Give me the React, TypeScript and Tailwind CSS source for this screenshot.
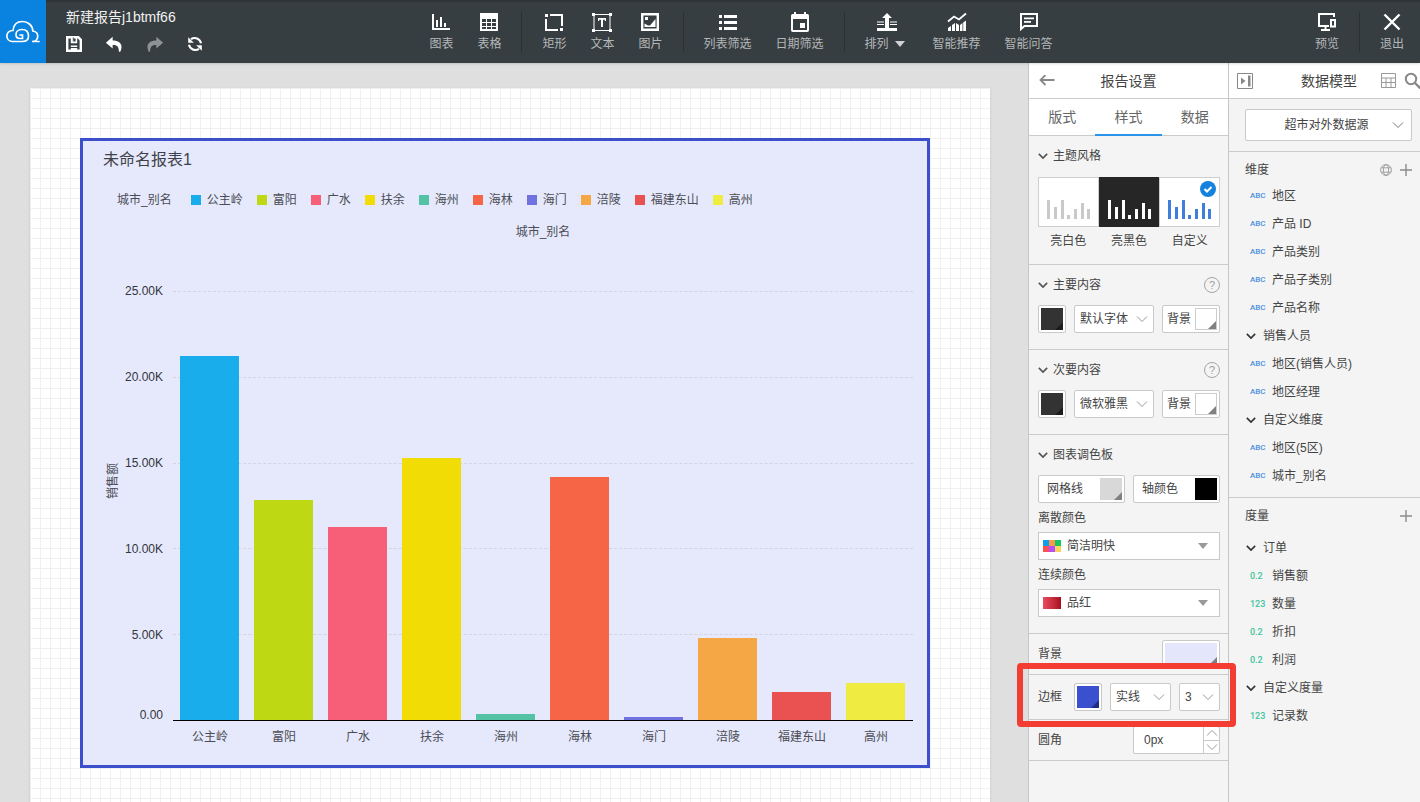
import { useState } from "react";
import type { ReactNode } from "react";
import clsx from "clsx";

const legend = [
  { name: "公主岭", value: 21230, color: "#1aadec" },
  { name: "富阳", value: 12830, color: "#bed914" },
  { name: "广水", value: 11250, color: "#f65f77" },
  { name: "扶余", value: 15270, color: "#f1dd05" },
  { name: "海州", value: 350, color: "#54c3a5" },
  { name: "海林", value: 14170, color: "#f66646" },
  { name: "海门", value: 190, color: "#7072df" },
  { name: "涪陵", value: 4780, color: "#f5a746" },
  { name: "福建东山", value: 1640, color: "#ea5251" },
  { name: "高州", value: 2160, color: "#f0eb41" },
];

const maxValue = 25000;
const ticks = ["25.00K", "20.00K", "15.00K", "10.00K", "5.00K"];

type Field = { type: "ABC" | "0.2" | "123" | "group"; label: string };

const dimensions: Field[] = [
  { type: "ABC", label: "地区" },
  { type: "ABC", label: "产品 ID" },
  { type: "ABC", label: "产品类别" },
  { type: "ABC", label: "产品子类别" },
  { type: "ABC", label: "产品名称" },
  { type: "group", label: "销售人员" },
  { type: "ABC", label: "地区(销售人员)" },
  { type: "ABC", label: "地区经理" },
  { type: "group", label: "自定义维度" },
  { type: "ABC", label: "地区(5区)" },
  { type: "ABC", label: "城市_别名" },
];

const measures: Field[] = [
  { type: "group", label: "订单" },
  { type: "0.2", label: "销售额" },
  { type: "123", label: "数量" },
  { type: "0.2", label: "折扣" },
  { type: "0.2", label: "利润" },
  { type: "group", label: "自定义度量" },
  { type: "123", label: "记录数" },
];

/* ---------- icons ---------- */

const Icon = ({ children, className = "size-5" }: { children: ReactNode; className?: string }) => (
  <svg viewBox="0 0 20 20" fill="currentColor" className={clsx("shrink-0", className)} aria-hidden="true">
    {children}
  </svg>
);

const ChartIcon = () => (
  <Icon>
    <path d="M1 2h2v14h16v2H1zM5 8h2v7H5zM9 5h2v10H9zM13 11h2v4h-2z" />
  </Icon>
);

const TableIcon = () => (
  <Icon>
    <path
      fillRule="evenodd"
      d="M1 1h18v18H1zM3 7v3h4V7zm5 0v3h4V7zm5 0v3h4V7zM3 11v3h4v-3zm5 0v3h4v-3zm5 0v3h4v-3zM3 15v2h4v-2zm5 0v2h4v-2zm5 0v2h4v-2z"
    />
  </Icon>
);

const RectIcon = () => (
  <Icon>
    <path d="M1 2h3v3H1zM6 2h13v12h-2V4H6zM1 7h2v10h11v2H1zM16 16h3v3h-3z" />
  </Icon>
);

const TextIcon = () => (
  <Icon>
    <path d="M2 2.5h16v16H2z" fill="none" stroke="currentColor" />
    <path d="M0 1h3v3H0zM17 1h3v3h-3zM0 17h3v3H0zM17 17h3v3h-3zM6 6h8v3h-1.2V7.7H11V15H9V7.7H7.2V9H6z" />
  </Icon>
);

const ImageIcon = () => (
  <Icon>
    <path fillRule="evenodd" d="M1 1h18v18H1zM3.400 3.400v13.200h13.200V3.400z" />
    <path d="M5 5h3v3H5zM4.500 15v-3.500L8 13.500h2l5.500-6.500v8z" />
  </Icon>
);

const ListIcon = () => (
  <Icon>
    <path d="M1 3h3v3H1zM6 3h13v3H6zM1 9h3v3H1zM6 9h13v3H6zM1 15h3v3H1zM6 15h13v3H6z" />
  </Icon>
);

const CalendarIcon = () => (
  <Icon>
    <path
      fillRule="evenodd"
      d="M4 0h2v2h8V0h2v2h1.500A1.800 1.800 0 0 1 19 3.800v14.400a1.800 1.800 0 0 1-1.800 1.800H2.800A1.800 1.800 0 0 1 1 18.200V3.800A1.800 1.800 0 0 1 2.800 2H4zM3 7v11h14V7zm7 4h5v5h-5z"
    />
  </Icon>
);

const ArrangeIcon = () => (
  <Icon>
    <path d="M10 1l5 5h-3v10H8V6H5zM0 16h20v3H0z" />
    <path d="M0 12.500h7M13 12.500h7M0 10h7M13 10h7" stroke="currentColor" />
  </Icon>
);

const RecommendIcon = () => (
  <Icon>
    <path d="M1 9.500l6-5 5 3 7-6" fill="none" stroke="currentColor" strokeWidth="1.800" />
    <path d="M1 16l3-2v5H1zM5 13l3-2v8H5zM9 11l3 2v6H9zM13 13l2.500-2v8H13zM16.200 10.500L19 8.500V19h-2.800z" />
  </Icon>
);

const ChatIcon = () => (
  <Icon>
    <path d="M2 2h16v12H5.500L2 17z" fill="none" stroke="currentColor" strokeWidth="2" />
    <path d="M5 5.500h10v1.800H5zM5 9h7v1.800H5z" />
  </Icon>
);

const PreviewIcon = () => (
  <Icon>
    <path d="M17 5V2H2v12h10M8.500 14v4M4 18h9" fill="none" stroke="currentColor" strokeWidth="2" />
    <path d="M14 8h4v6.500h-4z" fill="none" stroke="currentColor" strokeWidth="2" />
  </Icon>
);

const ExitIcon = () => (
  <Icon>
    <path d="M2.500 2.500l15 15M17.500 2.500l-15 15" stroke="currentColor" strokeWidth="2.400" />
  </Icon>
);

const CloudLogo = () => (
  <svg viewBox="0 0 34 24" className="w-[34px] h-6" fill="none" stroke="#fff" strokeWidth="1.700" strokeLinecap="round">
    <path d="M33 21.500h-7c7.500 0 7.500-10 .8-10.500C26.500 5 21.500 1.500 16.500 1.500 11 1.500 7.500 5 7 10.500-1 10.500-1 21 6 21.500h10.500c4 0 6-2 6-5.500 0-4.500-3-6.500-6.500-6.500-4 0-6 2.500-6 5 0 2.500 1.800 4 4 4h2.500V15H14" />
  </svg>
);

const SaveIcon = () => (
  <Icon className="size-4">
    <path
      fillRule="evenodd"
      d="M0 0h16l4 4v16H0zM3 3v14h14V5.500L15 3h-1v6H6V3zM8.500 2v5h1.200V2zM10 3h2v4h-2zM6 12h8v1.800H6zM6 15h8v2H6z"
    />
  </Icon>
);

const UndoIcon = ({ className }: { className?: string }) => (
  <Icon className={clsx("size-[18px]", className)}>
    <path d="M8.500 2L1 8.500 8.500 15v-4c4-.2 7 1 7 7.500h1.500C20.500 11 17 6 8.500 6z" />
  </Icon>
);

const RefreshIcon = () => (
  <Icon className="size-4">
    <path
      d="M5 4A8 8 0 0 1 17.500 9M2.500 11A8 8 0 0 0 15 16"
      fill="none"
      stroke="currentColor"
      strokeWidth="2.600"
    />
    <path d="M1.500 1.500v7h7zM18.500 18.500v-7h-7z" />
  </Icon>
);

const Chevron = ({ className, width = 1 }: { className?: string; width?: number }) => (
  <svg
    viewBox="0 0 12 8"
    className={clsx("shrink-0", className)}
    fill="none"
    stroke="currentColor"
    strokeWidth={width}
    aria-hidden="true"
  >
    <path d="M1 1.500l5 5 5-5" />
  </svg>
);

const PlusIcon = () => (
  <svg viewBox="0 0 12 12" className="size-3" stroke="#8b8b8b" strokeWidth="1.400" aria-hidden="true">
    <path d="M6 0v12M0 6h12" />
  </svg>
);

const GlobeIcon = () => (
  <svg viewBox="0 0 12 12" className="size-3" fill="none" stroke="#999" strokeWidth=".9" aria-hidden="true">
    <circle cx="6" cy="6" r="5.400" />
    <ellipse cx="6" cy="6" rx="2.600" ry="5.400" />
    <path d="M1.200 3.800h9.600M1.200 8.200h9.600" />
  </svg>
);

/* ---------- header ---------- */

const ToolButton = ({ icon, label, menu }: { icon: ReactNode; label: string; menu?: boolean }) => (
  <button className="flex flex-col items-center gap-1 text-white">
    {icon}
    <span className="flex items-center gap-1.5 text-xs leading-4 text-[#b4b7b9]">
      {label}
      {menu && (
        <svg viewBox="0 0 10 6" className="mr-1 w-2.5 h-1.5" fill="#d0d2d3">
          <path d="M0 0h10L5 6z" />
        </svg>
      )}
    </span>
  </button>
);

const Divider = () => <div className="w-px h-10 mx-5 bg-[#2a3033]" />;

const Header = () => (
  <header className="relative z-20 flex h-[63px] shrink-0 items-stretch border-t-2 border-[#2e3437] bg-[#373e41] shadow-sm">
    <div className="flex w-[230px] shrink-0">
      <a href="#" aria-label="首页" className="-mt-0.5 flex w-[46px] items-center justify-center bg-[#0a82df]">
        <CloudLogo />
      </a>
      <div className="flex flex-col gap-1.5 pl-5 pt-[5px]">
        <h1 className="text-sm leading-5 text-[#f2f2f2]">新建报告j1btmf66</h1>
        <div className="flex h-[22px] items-center gap-[23px] text-white">
          <button aria-label="保存"><SaveIcon /></button>
          <button aria-label="撤销"><UndoIcon /></button>
          <button aria-label="重做" className="text-[#8f9294]"><UndoIcon className="-scale-x-100" /></button>
          <button aria-label="刷新"><RefreshIcon /></button>
        </div>
      </div>
    </div>

    <div className="flex flex-1 items-center justify-center pb-0.5">
      <div className="flex gap-6">
        <ToolButton icon={<ChartIcon />} label="图表" />
        <ToolButton icon={<TableIcon />} label="表格" />
      </div>
      <Divider />
      <div className="flex gap-6">
        <ToolButton icon={<RectIcon />} label="矩形" />
        <ToolButton icon={<TextIcon />} label="文本" />
        <ToolButton icon={<ImageIcon />} label="图片" />
      </div>
      <Divider />
      <div className="flex gap-6">
        <ToolButton icon={<ListIcon />} label="列表筛选" />
        <ToolButton icon={<CalendarIcon />} label="日期筛选" />
      </div>
      <Divider />
      <div className="flex gap-6">
        <ToolButton icon={<ArrangeIcon />} label="排列" menu />
        <ToolButton icon={<RecommendIcon />} label="智能推荐" />
        <ToolButton icon={<ChatIcon />} label="智能问答" />
      </div>
    </div>

    <div className="flex w-[168px] shrink-0 items-center justify-end pb-0.5 pr-4">
      <ToolButton icon={<PreviewIcon />} label="预览" />
      <Divider />
      <ToolButton icon={<ExitIcon />} label="退出" />
    </div>
  </header>
);

/* ---------- chart ---------- */

const Chart = () => (
  <section className="h-[630px] border-[3px] border-[#3d50cb] bg-[#e6e9fb] pl-5 pr-3.5 text-xs text-[#4a4c55]">
    <h2 className="pt-[7px] text-base leading-6 text-[#3f414a]">未命名报表1</h2>

    <div className="mt-[18px] flex h-5 items-center gap-[19px] pl-3.5">
      <span>城市_别名</span>
      <ul className="flex gap-3.5">
        {legend.map((item) => (
          <li key={item.name} className="flex items-center gap-1.5 whitespace-nowrap">
            <span className="size-2.5" style={{ backgroundColor: item.color }} />
            {item.name}
          </li>
        ))}
      </ul>
    </div>

    <div className="mt-3 pl-[70px] text-center leading-5">城市_别名</div>

    <div className="flex">
      <div className="flex w-5 items-center justify-center">
        <span className="rotate-180 leading-4 [text-orientation:sideways] [writing-mode:vertical-rl]">销售额</span>
      </div>

      <div className="mt-[49px] flex h-[430px] w-[50px] flex-col pr-2.5 text-right text-[#33353d]">
        {ticks.map((tick, i) => (
          <div key={tick} className="flex flex-1 flex-col justify-between">
            <div className="flex h-0 items-center justify-end">{tick}</div>
            {i === ticks.length - 1 && <div className="leading-3">0.00</div>}
          </div>
        ))}
      </div>

      <div className="relative mt-[49px] h-[430px] flex-1 border-b border-black">
        <div className="absolute inset-0 flex flex-col">
          {ticks.map((tick) => (
            <div key={tick} className="flex-1 border-t border-dashed border-[#d2d4e2]" />
          ))}
        </div>
        <div className="relative flex h-full">
          {legend.map((item) => (
            <div key={item.name} className="flex flex-1 items-end pl-[7px] pr-2">
              <div
                className="w-full"
                style={{ height: `${(item.value / maxValue) * 100}%`, backgroundColor: item.color }}
              />
            </div>
          ))}
        </div>
      </div>
    </div>

    <div className="mt-1.5 flex pl-[70px]">
      {legend.map((item) => (
        <div key={item.name} className="flex-1 text-center leading-5">{item.name}</div>
      ))}
    </div>
  </section>
);

/* ---------- settings panel ---------- */

const Section = ({ title, help, children }: { title: string; help?: boolean; children: ReactNode }) => (
  <section className="border-b border-[#cbcbcb] pb-4 pl-[9px] pr-2 pt-2.5">
    <div className="flex h-5 items-center justify-between">
      <h3 className="flex items-center gap-[5px]">
        <Chevron className="w-2.5 h-2 text-[#555]" width={2} />
        {title}
      </h3>
      {help && (
        <button aria-label="帮助" className="flex size-4 items-center justify-center rounded-full border border-[#a5a5a5] text-[11px] leading-none text-[#a0a0a0]">
          ?
        </button>
      )}
    </div>
    {children}
  </section>
);

const box = "rounded-xs border border-[#c9c9c9] bg-white";

const Swatch = ({ className, corner = "#808080", label }: { className: string; corner?: string; label: string }) => (
  <button aria-label={label} className={clsx("flex items-end justify-end", className)}>
    {corner && (
      <svg viewBox="0 0 8 8" className="size-2" fill={corner}>
        <path d="M8 0v8H0z" />
      </svg>
    )}
  </button>
);

const Select = ({ options, label, className }: { options: string[]; label: string; className: string }) => (
  <div className={clsx("relative h-7", className)}>
    <select aria-label={label} className={clsx(box, "size-full appearance-none pl-[5px] pr-4")}>
      {options.map((option) => (
        <option key={option}>{option}</option>
      ))}
    </select>
    <Chevron className="pointer-events-none absolute right-1.5 top-2.5 w-3 h-2 text-[#999]" />
  </div>
);

const FontRow = ({ fonts, name }: { fonts: string[]; name: string }) => (
  <div className="mt-2.5 flex gap-2">
    <div className={clsx(box, "size-7 p-0.5")}>
      <Swatch className="size-full bg-[#333]" corner="#1c1c1c" label={`${name}颜色`} />
    </div>
    <Select className="flex-1" options={fonts} label={`${name}字体`} />
    <div className={clsx(box, "flex h-7 w-[58px] items-center justify-between p-0.5 pl-1")}>
      背景
      <Swatch className="size-[22px] border border-[#ccc] bg-white" label={`${name}背景`} />
    </div>
  </div>
);

const PaletteSelect = ({ label, id, options, children }: { label: string; id: string; options: string[]; children: ReactNode }) => (
  <>
    <label htmlFor={id} className="flex h-[29px] items-center">{label}</label>
    <div className="relative h-7">
      <select id={id} className="size-full appearance-none border border-[#c9c9c9] bg-white pl-7 pr-6">
        {options.map((option) => (
          <option key={option}>{option}</option>
        ))}
      </select>
      <div className="pointer-events-none absolute inset-0 flex items-center justify-between pl-[5px] pr-3">
        {children}
        <svg viewBox="0 0 10 6" className="w-2.5 h-1.5" fill="#999">
          <path d="M0 0h10L5 6z" />
        </svg>
      </div>
    </div>
  </>
);

const themes = [
  { name: "亮白色", tile: "border-[#cfcfcf] bg-white text-[#c9c9c9]" },
  { name: "亮黑色", tile: "border-[#262626] bg-[#262626] text-white" },
  { name: "自定义", tile: "border-[#cfcfcf] bg-white text-[#3f7edb]" },
];

const ThemePicker = () => {
  const [theme, setTheme] = useState("自定义");

  return (
    <div className="-mb-[3px] mt-[11px] flex">
      {themes.map((item) => (
        <label key={item.name} className="relative flex flex-1 flex-col text-center">
          <input
            type="radio"
            name="theme"
            className="sr-only"
            checked={theme === item.name}
            onChange={() => setTheme(item.name)}
          />
          <span className={clsx("flex h-[50px] items-end justify-center border pb-[7px]", item.tile)}>
            <svg viewBox="0 0 43 20" className="w-[43px] h-5" fill="currentColor">
              <path d="M0 1h3v19H0zM7 8h3v12H7zM14 1h3v19h-3zM20 16h3v4h-3zM27 10h3v10h-3zM34 4h3v16h-3zM40 10h3v10h-3z" />
            </svg>
          </span>
          {theme === item.name && (
            <svg viewBox="0 0 16 16" className="absolute right-1 top-1 size-4">
              <circle cx="8" cy="8" r="8" fill="#1583dd" />
              <path d="M4.500 8l2.500 2.500 4.500-4.500" fill="none" stroke="#fff" strokeWidth="2" />
            </svg>
          )}
          <span className="pt-1 leading-5">{item.name}</span>
        </label>
      ))}
    </div>
  );
};

const tabs = ["版式", "样式", "数据"];

const SettingsPanel = () => {
  const [tab, setTab] = useState("样式");
  const [radius, setRadius] = useState(0);

  return (
    <aside className="relative z-10 w-[200px] shrink-0 border-l border-[#c6c6c6] bg-[#f4f4f4]">
      <div className="flex h-9 items-center border-b border-[#cbcbcb] bg-white px-2.5">
        <button aria-label="返回" className="w-4">
          <svg viewBox="0 0 16 12" className="w-4 h-3" fill="none" stroke="#888" strokeWidth="1.800">
            <path d="M15.500 5H2M6.500 0l-5 5 5 5" />
          </svg>
        </button>
        <h2 className="flex-1 pr-4 text-center text-sm">报告设置</h2>
      </div>

      <div role="tablist" className="flex h-[37px] border-b border-[#cbcbcb] bg-white">
        {tabs.map((name) => (
          <button
            key={name}
            role="tab"
            aria-selected={tab === name}
            onClick={() => setTab(name)}
            className={clsx(
              "-mb-px flex-1 border-b-2 text-sm text-[#666]",
              tab === name ? "border-[#2a94ea]" : "border-transparent"
            )}
          >
            {name}
          </button>
        ))}
      </div>

      <Section title="主题风格">
        <ThemePicker />
      </Section>

      <Section title="主要内容" help>
        <FontRow name="主要内容" fonts={["默认字体", "微软雅黑"]} />
      </Section>

      <Section title="次要内容" help>
        <FontRow name="次要内容" fonts={["微软雅黑", "默认字体"]} />
      </Section>

      <Section title="图表调色板">
        <div className="mt-2.5 flex gap-2">
          <div className={clsx(box, "flex h-7 flex-1 items-center justify-between p-0.5 pl-2")}>
            网格线
            <Swatch className="size-[22px] bg-[#d8d8d8]" label="网格线颜色" />
          </div>
          <div className={clsx(box, "flex h-7 flex-1 items-center justify-between p-0.5 pl-2")}>
            轴颜色
            <Swatch className="size-[22px] bg-black" corner="" label="轴颜色" />
          </div>
        </div>

        <PaletteSelect id="discrete" label="离散颜色" options={["简洁明快"]}>
          <svg viewBox="0 0 18 12" className="w-[18px] h-3">
            <path fill="#0f9fea" d="M0 0h6v6H0z" />
            <path fill="#fb9a4b" d="M6 0h6v6H6z" />
            <path fill="#14c761" d="M12 0h6v6h-6z" />
            <path fill="#fc5050" d="M0 6h6v6H0z" />
            <path fill="#b44dfa" d="M6 6h6v6H6z" />
            <path fill="#fdd35a" d="M12 6h6v6h-6z" />
          </svg>
        </PaletteSelect>

        <PaletteSelect id="continuous" label="连续颜色" options={["品红"]}>
          <span className="h-3 w-[18px] bg-linear-to-r from-[#ec4b60] to-[#a80d22]" />
        </PaletteSelect>
      </Section>

      <div className="flex h-[41px] items-center justify-between border-b border-[#cbcbcb] pl-[9px] pr-2">
        背景
        <div className={clsx(box, "h-7 w-[58px] p-0.5")}>
          <Swatch className="size-full bg-[#e4e7fb]" label="背景颜色" />
        </div>
      </div>

      <div className="relative flex h-[45px] items-center gap-2 border-b border-[#cbcbcb] pl-[9px] pr-2">
        <span className="w-7">边框</span>
        <div className={clsx(box, "size-7 p-0.5")}>
          <Swatch className="size-full bg-[#3a50cf]" corner="#1f2c80" label="边框颜色" />
        </div>
        <Select className="flex-1" options={["实线", "虚线", "点线"]} label="边框样式" />
        <Select className="w-[41px]" options={["3", "1", "2", "4", "5"]} label="边框宽度" />
        <div className="pointer-events-none absolute -bottom-2 -left-3 -right-2 -top-3 rounded-sm border-[6px] border-[#f33c32]" />
      </div>

      <div className="flex h-[41px] items-center justify-between border-b border-[#cbcbcb] pl-[9px] pr-2">
        <label htmlFor="radius">圆角</label>
        <div className={clsx(box, "flex h-7 w-[87px]")}>
          <input
            id="radius"
            className="min-w-0 flex-1 pl-2.5 outline-none"
            value={`${radius}px`}
            onChange={(e) => setRadius(parseInt(e.target.value) || 0)}
          />
          <div className="flex w-4 flex-col border-l border-[#c9c9c9] text-[#999]">
            <button aria-label="增加" onClick={() => setRadius(radius + 1)} className="flex flex-1 items-center justify-center border-b border-[#c9c9c9]">
              <Chevron className="w-3 h-2 rotate-180" />
            </button>
            <button aria-label="减少" onClick={() => setRadius(Math.max(0, radius - 1))} className="flex flex-1 items-center justify-center">
              <Chevron className="w-3 h-2" />
            </button>
          </div>
        </div>
      </div>
    </aside>
  );
};

/* ---------- data panel ---------- */

const FieldList = ({ fields }: { fields: Field[] }) => (
  <ul>
    {fields.map((field) =>
      field.type === "group" ? (
        <li key={field.label} className="flex h-7 items-center gap-[7px] pl-px">
          <Chevron className="w-2.5 h-2 text-[#333]" width={2} />
          {field.label}
        </li>
      ) : (
        <li key={field.label} className="flex h-7 items-center pl-[5px]">
          <span
            className={clsx(
              "w-[22px] font-[Roboto,sans-serif] font-medium leading-none",
              field.type === "ABC" ? "text-[8px] text-[#4a90e2]" : "text-[9px] text-[#3fc49d]"
            )}
          >
            {field.type}
          </span>
          {field.label}
        </li>
      )
    )}
  </ul>
);

const DataPanel = () => (
  <aside className="w-48 shrink-0 overflow-hidden border-l border-[#c6c6c6] bg-[#f4f4f4]">
    <div className="flex h-9 items-center border-b border-[#cbcbcb] bg-white pl-2">
      <button aria-label="收起">
        <svg viewBox="0 0 16 16" className="size-4" fill="#888">
          <path d="M.5.500h15v15H.500z" fill="none" stroke="#888" />
          <path d="M4 4.500l4.500 3.500L4 11.500zM11 2.500h2.500v11H11z" />
        </svg>
      </button>
      <h2 className="flex-1 pl-6 text-center text-sm">数据模型</h2>
      <div className="flex items-center gap-2">
        <button aria-label="表格视图">
          <svg viewBox="0 0 15 15" className="size-[15px]" fill="none" stroke="#999">
            <path d="M.500.500h14v14H.500zM.500 5h14M.500 9.500h14M5 5v9.500M10 5v9.500" />
          </svg>
        </button>
        <button aria-label="搜索" className="-mr-px">
          <svg viewBox="0 0 17 17" className="size-[17px]" fill="none" stroke="#888" strokeWidth="2">
            <circle cx="7" cy="7" r="5.200" />
            <path d="M11 11l5.500 5.500" strokeWidth="2.400" />
          </svg>
        </button>
      </div>
    </div>

    <div className="border-b border-[#cbcbcb] py-2.5 pl-4 pr-2">
      <div className="relative h-8">
        <select aria-label="数据源" className={clsx(box, "size-full appearance-none pl-1 pr-2 text-center [text-align-last:center]")}>
          <option>超市对外数据源</option>
        </select>
        <Chevron className="pointer-events-none absolute right-2 top-3 w-3 h-2 text-[#777]" />
      </div>
    </div>

    <section className="border-b border-[#cbcbcb] pb-[7px] pl-4 pr-2 pt-1.5">
      <div className="flex h-6 items-center justify-between">
        <h3>维度</h3>
        <div className="flex items-center gap-2">
          <button aria-label="地理角色"><GlobeIcon /></button>
          <button aria-label="新建维度"><PlusIcon /></button>
        </div>
      </div>
      <FieldList fields={dimensions} />
    </section>

    <section className="pl-4 pr-2 pt-1.5">
      <div className="mb-1.5 flex h-6 items-center justify-between">
        <h3>度量</h3>
        <button aria-label="新建度量"><PlusIcon /></button>
      </div>
      <FieldList fields={measures} />
    </section>
  </aside>
);

const App = () => (
  <div className="flex h-screen flex-col overflow-hidden font-['Liberation_Sans','Noto_Sans_CJK_SC',sans-serif] text-xs text-[#444]">
    <Header />
    <div className="flex min-h-0 flex-1">
      <main className="min-w-0 flex-1 overflow-hidden bg-[#dfdfdf] pl-[30px] pr-[38px] pt-[25px]">
        <div className="h-full bg-white bg-[linear-gradient(to_right,#f0f0f0_1px,transparent_1px),linear-gradient(to_bottom,#f0f0f0_1px,transparent_1px)] bg-size-[10px_10px] pl-[50px] pr-[60px] pt-[50px] shadow">
          <Chart />
        </div>
      </main>
      <SettingsPanel />
      <DataPanel />
    </div>
  </div>
);

export default App;
